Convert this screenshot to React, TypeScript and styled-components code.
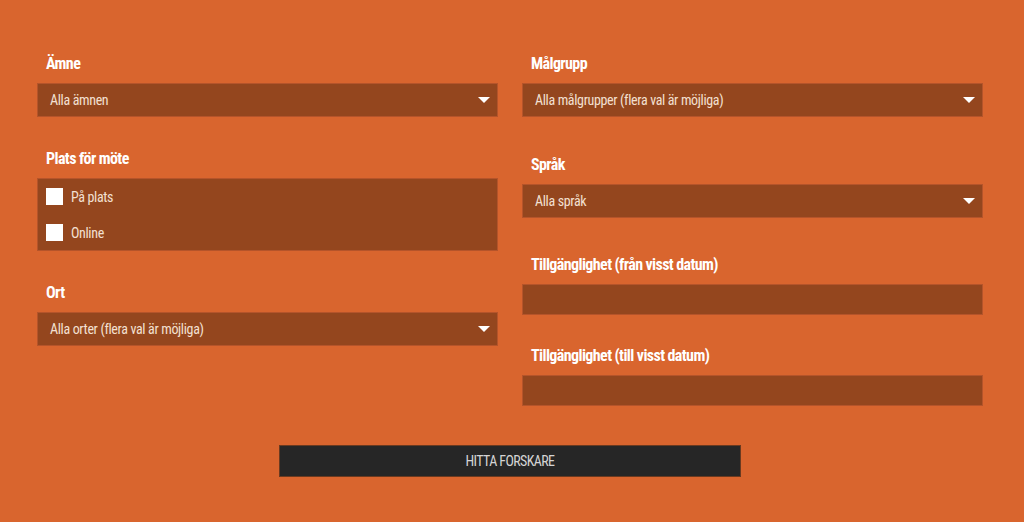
import React from "react";
import styled, { createGlobalStyle } from "styled-components";

const Global = createGlobalStyle`
  html, body { margin: 0; padding: 0; background: #d9652e; }
  body {
    font-family: "Roboto Condensed", "Roboto", "Liberation Sans", sans-serif;
    font-stretch: condensed;
  }
  * { box-sizing: border-box; }
`;

const Page = styled.form`
  width: 1024px;
  height: 522px;
  background: #d9652e;
  padding: 54px 41px 0 37px;
  display: flex;
  flex-direction: column;
`;

const Columns = styled.div`
  display: grid;
  grid-template-columns: 461px 461px;
  column-gap: 24px;
  align-items: start;
`;

const Column = styled.div`
  display: flex;
  flex-direction: column;
`;

const Group = styled.div<{ $after?: number }>`
  display: flex;
  flex-direction: column;
  margin-bottom: ${(p) => p.$after ?? 0}px;
`;

const Label = styled.div`
  height: 19px;
  line-height: 19px;
  font-size: 16px;
  font-weight: 700;
  letter-spacing: -0.6px;
  color: #ffffff;
  padding-left: 9px;
  margin-bottom: 10px;
  white-space: nowrap;
`;

const Select = styled.div`
  height: 34px;
  background: #94461e;
  border: 1px solid #b5542a;
  display: flex;
  align-items: center;
  justify-content: space-between;
  padding: 0 7px 0 12px;
  color: #f3e0d2;
  font-size: 14px;
  letter-spacing: -0.35px;
`;

const Arrow = styled.span`
  width: 0;
  height: 0;
  border-left: 6px solid transparent;
  border-right: 6px solid transparent;
  border-top: 6px solid #ffffff;
`;

const DateInput = styled.div`
  height: 31px;
  background: #94461e;
  border: 1px solid #b5542a;
`;

const CheckBox = styled.div`
  height: 73px;
  background: #94461e;
  border: 1px solid #b5542a;
  padding: 0 8px;
  display: flex;
  flex-direction: column;
  gap: 1px;
`;

const CheckRow = styled.label`
  height: 36px;
  display: flex;
  align-items: center;
  gap: 8px;
  color: #f3e0d2;
  font-size: 14px;
  letter-spacing: -0.35px;
`;

const Square = styled.span`
  width: 17px;
  height: 17px;
  background: #ffffff;
  flex: none;
`;

const Submit = styled.div`
  align-self: center;
  margin-top: 39px;
  width: 462px;
  height: 32px;
  background: #262626;
  border: 1px solid #6a3a20;
  color: #d4d4d4;
  font-size: 14px;
  letter-spacing: -0.6px;
  display: flex;
  align-items: center;
  justify-content: center;
`;

const SelectField = ({ value }: { value: string }) => (
  <Select>
    <span>{value}</span>
    <Arrow />
  </Select>
);

export default function App() {
  return (
    <>
      <Global />
      <Page>
        <Columns>
          <Column>
            <Group $after={32}>
              <Label>Ämne</Label>
              <SelectField value="Alla ämnen" />
            </Group>
            <Group $after={32}>
              <Label>Plats för möte</Label>
              <CheckBox>
                <CheckRow>
                  <Square />
                  På plats
                </CheckRow>
                <CheckRow>
                  <Square />
                  Online
                </CheckRow>
              </CheckBox>
            </Group>
            <Group>
              <Label>Ort</Label>
              <SelectField value="Alla orter (flera val är möjliga)" />
            </Group>
          </Column>
          <Column>
            <Group $after={38}>
              <Label>Målgrupp</Label>
              <SelectField value="Alla målgrupper (flera val är möjliga)" />
            </Group>
            <Group $after={37}>
              <Label>Språk</Label>
              <SelectField value="Alla språk" />
            </Group>
            <Group $after={31}>
              <Label>Tillgänglighet (från visst datum)</Label>
              <DateInput />
            </Group>
            <Group>
              <Label>Tillgänglighet (till visst datum)</Label>
              <DateInput />
            </Group>
          </Column>
        </Columns>
        <Submit>HITTA FORSKARE</Submit>
      </Page>
    </>
  );
}
